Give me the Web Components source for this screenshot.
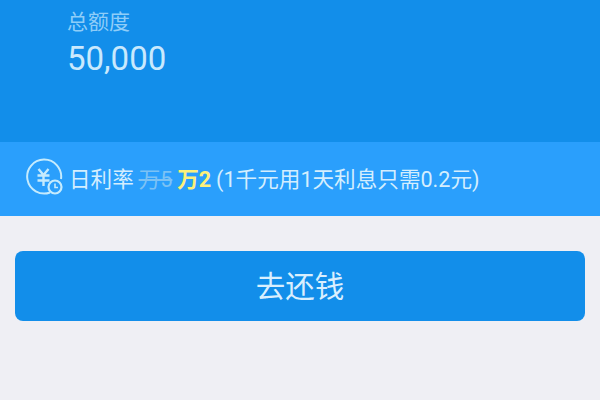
<!DOCTYPE html>
<html lang="zh">
<head>
<meta charset="utf-8">
<style>
  html, body { margin: 0; height: 400px; overflow: hidden; background: #efeff4; }
  body { font-family: Roboto, "Noto Sans CJK SC", sans-serif; }
</style>
</head>
<body>
<loan-page>
  <credit-summary label="总额度" amount="50,000"></credit-summary>
  <rate-bar>日利率 <s>万5</s> <b>万2</b> (1千元用1天利息只需0.2元)</rate-bar>
  <repay-button>去还钱</repay-button>
</loan-page>

<script>
(function () {

  class LoanPage extends HTMLElement {
    constructor() {
      super();
      this.attachShadow({ mode: 'open' });
      this.shadowRoot.innerHTML = `
        <style>
          :host { display: flex; flex-direction: column; height: 400px; }
        </style>
        <slot></slot>`;
    }
  }

  class CreditSummary extends HTMLElement {
    constructor() {
      super();
      this.attachShadow({ mode: 'open' });
      this.shadowRoot.innerHTML = `
        <style>
          :host {
            display: flex;
            flex-direction: column;
            box-sizing: border-box;
            height: 142px;
            padding: 10px 0 0 67px;
            background: #128eea;
          }
          .label { font-size: 21px; line-height: 24px; color: #8fcdf8; }
          .amount { font-size: 33px; line-height: 38px; margin-top: 6px; color: #c9e9fd; }
        </style>
        <div class="label"></div>
        <div class="amount"></div>`;
    }

    connectedCallback() {
      this.shadowRoot.querySelector('.label').textContent = this.getAttribute('label');
      this.shadowRoot.querySelector('.amount').textContent = this.getAttribute('amount');
    }
  }

  class RateBar extends HTMLElement {
    constructor() {
      super();
      this.attachShadow({ mode: 'open' });
      this.shadowRoot.innerHTML = `
        <style>
          :host {
            display: flex;
            align-items: center;
            gap: 4px;
            box-sizing: border-box;
            height: 74px;
            padding: 0 0 4px 25px;
            background: #2a9ffc;
            color: #d4eefe;
            font-size: 21.600px;
            word-spacing: -0.5px;
            white-space: nowrap;
          }
          svg { flex: none; width: 40px; height: 40px; }
          ::slotted(s) { color: #7cc2f4; }
          ::slotted(b) { color: #fdf07a; }
        </style>
        <svg viewBox="0 0 40 40" fill="none" stroke="#c5ebfd" stroke-width="2">
          <path d="M25 35.500A17 17 0 1 1 36 22"/>
          <path d="M13.500 12l5 6 5-6M18.500 18v11M12.500 18.500h12M12.500 23.500h12" stroke-width="2.400"/>
          <circle cx="30" cy="30" r="6.500" stroke-width="2.200"/>
          <path d="M30 26.500V30.500h3" stroke-width="1.600"/>
        </svg>
        <span><slot></slot></span>`;
    }
  }

  class RepayButton extends HTMLElement {
    constructor() {
      super();
      this.attachShadow({ mode: 'open' });
      this.shadowRoot.innerHTML = `
        <style>
          :host { display: block; padding: 35px 15px 0; }
          button {
            display: block;
            width: 100%;
            height: 70px;
            padding: 0 0 4px;
            border: 0;
            border-radius: 8px;
            background: #128eea;
            color: #d9effe;
            font: inherit;
            font-size: 29.500px;
          }
        </style>
        <button><slot></slot></button>`;
    }
  }

  customElements.define('loan-page', LoanPage);
  customElements.define('credit-summary', CreditSummary);
  customElements.define('rate-bar', RateBar);
  customElements.define('repay-button', RepayButton);

})();
</script>
</body>
</html>
